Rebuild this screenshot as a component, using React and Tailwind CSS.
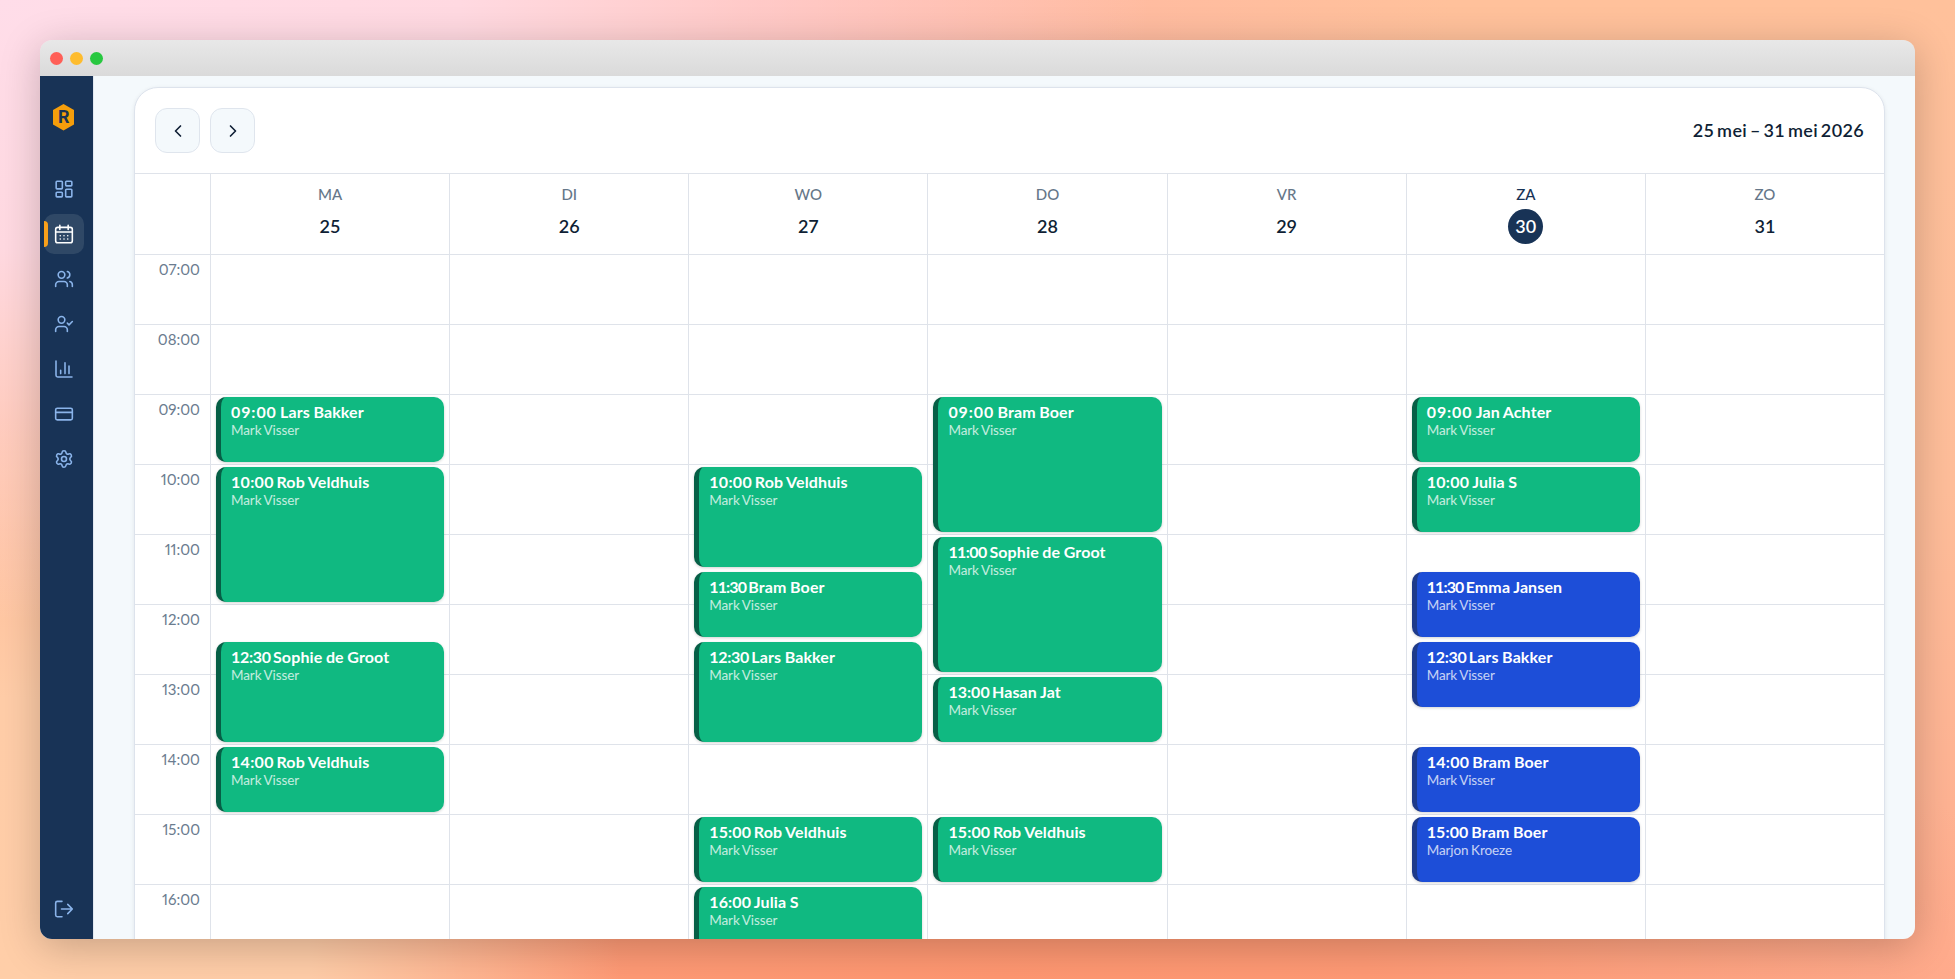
import React from "react";
import { Users, CreditCard, Settings, ChevronLeft, ChevronRight } from "lucide-react";

const days = [
  { name: "MA", date: 25, events: [[9, 1, "Lars Bakker"], [10, 2, "Rob Veldhuis"], [12.5, 1.5, "Sophie de Groot"], [14, 1, "Rob Veldhuis"]] },
  { name: "DI", date: 26, events: [] },
  { name: "WO", date: 27, events: [[10, 1.5, "Rob Veldhuis"], [11.5, 1, "Bram Boer"], [12.5, 1.5, "Lars Bakker"], [15, 1, "Rob Veldhuis"], [16, 1, "Julia S"]] },
  { name: "DO", date: 28, events: [[9, 2, "Bram Boer"], [11, 2, "Sophie de Groot"], [13, 1, "Hasan Jat"], [15, 1, "Rob Veldhuis"]] },
  { name: "VR", date: 29, events: [] },
  { name: "ZA", date: 30, today: true, events: [[9, 1, "Jan Achter"], [10, 1, "Julia S"], [11.5, 1, "Emma Jansen", "blue"], [12.5, 1, "Lars Bakker", "blue"], [14, 1, "Bram Boer", "blue"], [15, 1, "Bram Boer", "blue", "Marjon Kroeze"]] },
  { name: "ZO", date: 31, events: [] },
];
const hours = [7, 8, 9, 10, 11, 12, 13, 14, 15, 16];
const ROW = 70;
const clock = (h) => String(Math.floor(h)).padStart(2, "0") + ":" + (h % 1 ? "30" : "00");

const timeFit = {
  "09:00": "w-[49px] tracking-[0.9px]",
  "10:00": "w-[45.5px] tracking-[0.3px]",
  "11:00": "w-[41px] tracking-[-0.6px]",
  "11:30": "w-[39px] tracking-[-0.9px]",
  "12:30": "w-[42px] tracking-[-0.3px]",
  "13:00": "w-[43.5px] tracking-[0px]",
  "14:00": "w-[45.500px] tracking-[0.3px]",
  "15:00": "w-[44.500px] tracking-[0.1px]",
  "16:00": "w-[44.500px] tracking-[0.1px]",
};

function Glyph({ className, strokeWidth, children }) {
  return (
    <svg className={className} viewBox="0 0 24 24" fill="none" stroke="currentColor" strokeWidth={strokeWidth} strokeLinecap="round" strokeLinejoin="round">
      {children}
    </svg>
  );
}
const DashboardIcon = (p) => (
  <Glyph {...p}>
    <rect x="2.6" y="2.6" width="7.4" height="9.2" rx="1" />
    <rect x="14" y="2.6" width="7.4" height="5.6" rx="1" />
    <rect x="14" y="12.2" width="7.4" height="9.2" rx="1" />
    <rect x="2.6" y="15.8" width="7.4" height="5.6" rx="1" />
  </Glyph>
);
const CalendarIcon = (p) => (
  <Glyph {...p}>
    <rect x="2" y="4" width="20" height="18.5" rx="2.5" />
    <path d="M7 1.5v5M17 1.5v5M2 9.5h20" />
    <path d="M7.5 14h.01M12 14h.01M16.5 14h.01M7.5 18h.01M12 18h.01M16.5 18h.01" />
  </Glyph>
);
const UserCheckIcon = (p) => (
  <Glyph {...p}>
    <path d="M16 21v-2a4 4 0 0 0-4-4H6a4 4 0 0 0-4 4v2" />
    <circle cx="9" cy="7" r="4" />
    <path d="m16 11 2 2 4-4" />
  </Glyph>
);
const ChartIcon = (p) => (
  <Glyph {...p}>
    <path d="M2.4 2.5v17a2 2 0 0 0 2 2h17.2M8 17.5v-4M13.2 17.5V4.5M18 17.5V8.5" />
  </Glyph>
);
const LogOutIcon = (p) => (
  <Glyph {...p}>
    <path d="M9.6 2.8H4a2 2 0 0 0-2 2v14.4a2 2 0 0 0 2 2h5.6M9 12h13M16.5 6.5 22 12l-5.5 5.5" />
  </Glyph>
);

const nav = [DashboardIcon, CalendarIcon, Users, UserCheckIcon, ChartIcon, CreditCard, Settings];

function Event({ start, length, name, blue, trainer }) {
  const time = clock(start);
  return (
    <div
      className={"absolute inset-x-[5px] rounded-[10px] border-l-[5px] pl-[10px] pt-[6px] text-white shadow-[0_1px_3px_rgba(0,0,0,0.18)] " + (blue ? "border-[#1e3a8a] bg-[#1d4ed8]" : "border-[#065f46] bg-[#10b981]")}
      style={{ top: (start - 7) * ROW + 2, height: length * ROW - 5 }}
    >
      <div className="flex text-[16px] leading-[18px] font-bold whitespace-nowrap">
        <span className={"shrink-0 " + timeFit[time]}>{time}</span>
        <span className="tracking-[0.12px] [word-spacing:-0.5px]">{name}</span>
      </div>
      <div className="text-[13.5px] leading-[18px] tracking-[-0.1px] opacity-75 whitespace-nowrap [word-spacing:-0.8px]">{trainer}</div>
    </div>
  );
}

export default function App() {
  return (
    <div className="h-[979px] w-[1955px] overflow-hidden bg-[radial-gradient(1150px_620px_at_0px_0px,#ffdde9_0%,#ffd9e1_40%,#ffd9e100_100%),radial-gradient(620px_560px_at_0px_979px,#ffcea8_0%,#ffcda8_50%,#ffcda800_100%),radial-gradient(1050px_400px_at_1000px_979px,#ff9771_0%,#ff9a75_35%,#ff9b7600_100%),radial-gradient(700px_500px_at_750px_0px,#ffb5a6_0%,#ffb5a600_100%),linear-gradient(to_bottom,#ffc19b_0%,#ffbe9a_50%,#ffad8f_100%)] p-10 font-['Lato','Noto_Sans',sans-serif]">
      <div className="flex h-[899px] w-[1875px] flex-col overflow-hidden rounded-xl shadow-[0_8px_40px_rgba(0,0,0,0.22)]">
        <div className="flex h-9 shrink-0 items-center gap-[7px] bg-linear-to-b from-[#e8e8e8] to-[#dadada] pl-[10px]">
          <span className="size-[13px] rounded-full bg-[#ff5f57]" />
          <span className="size-[13px] rounded-full bg-[#febc2e]" />
          <span className="size-[13px] rounded-full bg-[#28c840]" />
        </div>
        <div className="flex min-h-0 flex-1 bg-[#f4f9fc]">
          <aside className="flex w-[54px] shrink-0 flex-col border-r border-[#e2e8f0] bg-[#183356] pl-1">
            <svg className="mt-7 ml-[9px] h-[27px] w-[21px]" viewBox="0 0 21 27">
              <path d="M10.5 0 21 6v14.5l-10.5 6L0 20.5V6z" fill="#f59e0b" />
              <text x="10.7" y="19.3" textAnchor="middle" fontSize="18" fontWeight="700" fontFamily="Roboto" fill="#193353">R</text>
            </svg>
            <nav className="mt-[38px] flex flex-col gap-[5px]">
              {nav.map((Icon, i) => (
                <div key={i} className={"flex h-10 w-10 items-center rounded-[10px] " + (i === 1 ? "bg-[#2f4866] text-white" : "text-[#8ab4ea]")}>
                  <span className={"h-[26px] w-1 rounded-r " + (i === 1 ? "bg-[#f9a01b]" : "")} />
                  <Icon className="ml-[6px] size-5" strokeWidth={1.9} />
                </div>
              ))}
            </nav>
            <LogOutIcon className="mt-auto mb-5 ml-[10px] size-5 text-[#8ab4ea]" strokeWidth={1.9} />
          </aside>
          <main className="min-w-0 flex-1 pt-[11px] pr-[30px] pl-10">
            <section className="h-[1000px] overflow-hidden rounded-t-[24px] border border-[#dde3ec] bg-white shadow-[0_1px_4px_rgba(15,23,42,0.08)]">
              <header className="flex h-[86px] items-center justify-between border-b border-[#dfe3ea] px-5">
                <div className="flex gap-[10px]">
                  <button className="grid size-[45px] place-items-center rounded-xl border border-[#dfe5ed] bg-[#f4f9fc] text-[#0f1f35]"><ChevronLeft className="size-5" /></button>
                  <button className="grid size-[45px] place-items-center rounded-xl border border-[#dfe5ed] bg-[#f4f9fc] text-[#0f1f35]"><ChevronRight className="size-5" /></button>
                </div>
                <h1 className="text-[18px] font-semibold tracking-[0.35px] text-[#0f1f35] [word-spacing:-2px]">25 mei – 31 mei 2026</h1>
              </header>
              <div className="flex">
                <div className="w-[75px] shrink-0">
                  <div className="h-[81px] border-b border-[#dfe3ea]" />
                  {hours.map((h) => (
                    <div key={h} className="h-[70px] border-b border-[#dfe3ea] pt-[5px] pr-[10px] text-right text-[15px] leading-[18px] text-[#6b7c8f] [font-feature-settings:'pnum']">{clock(h)}</div>
                  ))}
                </div>
                <div className="grid flex-1 grid-cols-7">
                  {days.map((d) => (
                    <div key={d.name} className="border-l border-[#dfe3ea]">
                      <div className="flex h-[81px] flex-col items-center border-b border-[#dfe3ea] pt-[10px]">
                        <span className={"text-[15px] leading-5 font-medium " + (d.today ? "text-[#183356]" : "text-[#667789]")}>{d.name}</span>
                        <span className={"mt-[5px] grid size-[35px] place-items-center rounded-full text-[18px] font-semibold " + (d.today ? "bg-[#183356] text-white" : "text-[#0f1f35]")}>{d.date}</span>
                      </div>
                      <div className="relative">
                        {hours.map((h) => <div key={h} className="h-[70px] border-b border-[#dfe3ea]" />)}
                        {d.events.map(([start, length, name, color, trainer]) => (
                          <Event key={start} start={start} length={length} name={name} blue={color === "blue"} trainer={trainer || "Mark Visser"} />
                        ))}
                      </div>
                    </div>
                  ))}
                </div>
              </div>
            </section>
          </main>
        </div>
      </div>
    </div>
  );
}
